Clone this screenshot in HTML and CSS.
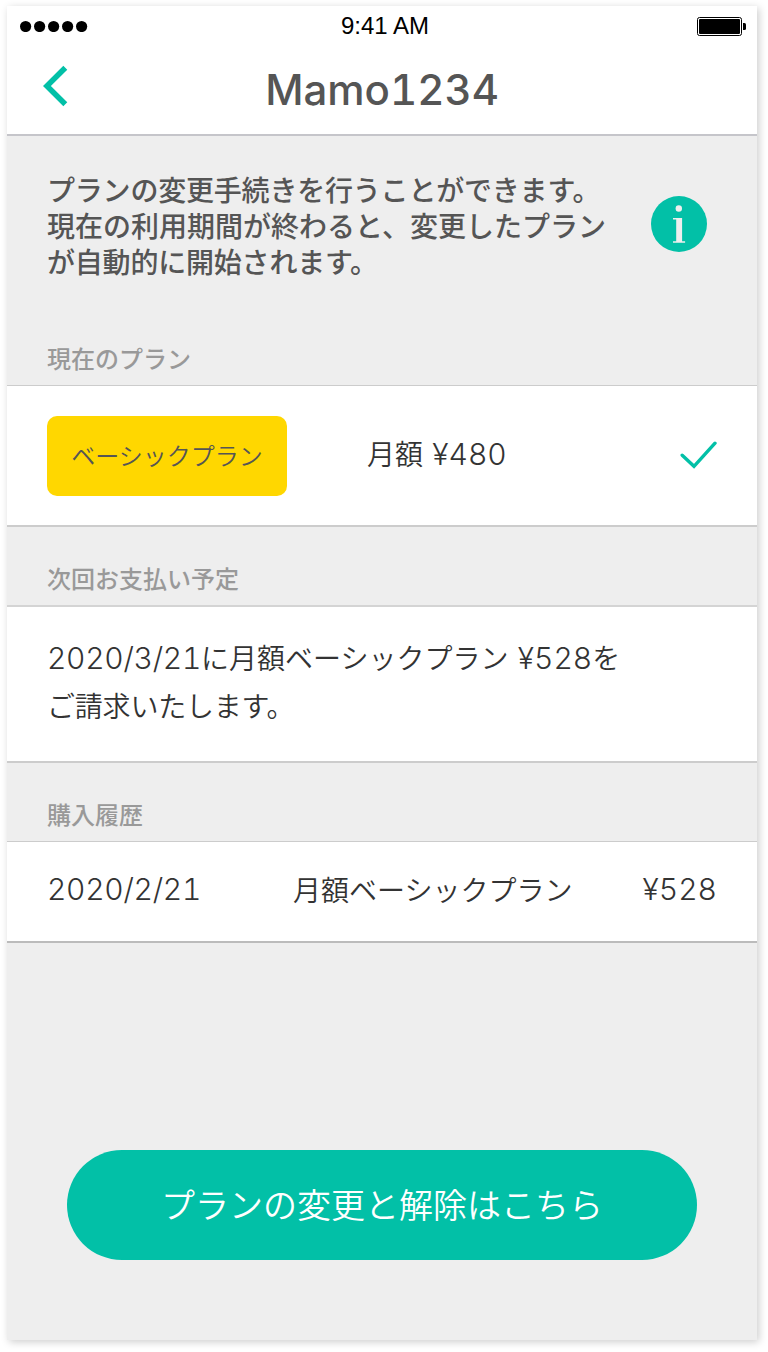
FILE: index.html
```html
<!DOCTYPE html>
<html lang="ja">
<head>
<meta charset="utf-8">
<title>Mamo1234</title>
<link rel="stylesheet" href="styles.css">
</head>
<body>
<main class="screen">
  <header class="header">
    <div class="status">
      <svg class="signal" width="68" height="12" viewBox="0 0 68 12"><circle cx="5.6" cy="6.5" r="5.6"/><circle cx="19.6" cy="6.5" r="5.6"/><circle cx="33.6" cy="6.5" r="5.6"/><circle cx="47.6" cy="6.5" r="5.6"/><circle cx="61.6" cy="6.5" r="5.6"/></svg>
      <span class="time">9:41 AM</span>
      <svg class="battery" width="49" height="19" viewBox="0 0 49 19"><rect x=".5" y=".5" width="44" height="18" rx="2" fill="none" stroke="#000"/><rect x="2" y="2" width="41" height="15" rx="1"/><path d="M46 6h1.500q1.500 0 1.500 1.500v4q0 1.500-1.500 1.500H46z"/></svg>
    </div>
    <div class="nav">
      <svg class="back" width="26" height="42" viewBox="0 0 26 42"><path d="M22.300 2.800 3.900 21l18.400 18.200" fill="none" stroke="#02c0a7" stroke-width="5.600" stroke-linecap="butt" stroke-linejoin="miter"/></svg>
      <h1 class="title">Mamo<span class="title-num">1234</span></h1>
    </div>
  </header>

  <section class="intro">
    <p class="intro-text"><span class="tight">プランの変更手続きを行うことができます。</span><br>現在の利用期間が終わると、変更したプラン<br><span class="tight">が自動的に開始されます。</span></p>
    <svg class="info" width="56" height="56" viewBox="0 0 56 56"><circle cx="28" cy="28" r="28" fill="#02c0a7"/><circle cx="27.800" cy="12.500" r="3.200" fill="#eee"/><path d="M22 22h9.100v23.200h3v1.500H22v-1.500h3.200V23.500H22z" fill="#eee"/></svg>
  </section>

  <h2 class="label label-first">現在のプラン</h2>
  <section class="row row-plan">
    <span class="badge">ベーシックプラン</span>
    <span class="price">月額 <span class="num">¥480</span></span>
    <svg class="check" width="38" height="28" viewBox="0 0 38 28"><path d="M3.200 14.200 15 25.300 36 2.200" fill="none" stroke="#02c0a7" stroke-width="3.400" stroke-linecap="round" stroke-linejoin="miter"/></svg>
  </section>

  <h2 class="label label-next">次回お支払い予定</h2>
  <section class="row row-next">
    <p class="next-text"><span class="num date-text">2020/3/21</span>に月額ベーシックプラン <span class="num">¥528</span>を<br><span class="tight">ご請求いたします。</span></p>
  </section>

  <h2 class="label label-history">購入履歴</h2>
  <section class="row row-history">
    <span class="num date date-text">2020/2/21</span>
    <span class="item">月額ベーシックプラン</span>
    <span class="num amount">¥528</span>
  </section>

  <footer class="footer">
    <button class="button" type="button">プランの変更と解除はこちら</button>
  </footer>
</main>
</body>
</html>
```
FILE: styles.css
```css
* {
  box-sizing: border-box;
}

body {
  margin: 0;
  padding: 6px 11px 12px 7px;
  background: #fff;
  color: #333;
  font-family: "Noto Sans CJK JP", sans-serif;
}

h1, h2, p {
  margin: 0;
}

svg {
  display: block;
  flex: none;
}

.screen {
  display: flex;
  flex-direction: column;
  width: 750px;
  height: 1334px;
  background: #eee;
  box-shadow: 2px 2px 8px rgba(0, 0, 0, .2);
  white-space: nowrap;
}

.header {
  height: 130px;
  background: #fff;
  border-bottom: 2px solid #c5c5ca;
}

.status {
  display: grid;
  grid-template-columns: 1fr auto 1fr;
  align-items: center;
  height: 40px;
  padding: 0 11px 0 13px;
}

.time {
  padding-left: 4px;
  color: #000;
  font: 24px/40px "Liberation Sans", Arial, sans-serif;
}

.battery {
  justify-self: end;
}

.nav {
  display: grid;
  grid-template-columns: 60px 1fr 60px;
  height: 88px;
}

.back {
  margin: 19px 0 0 36px;
}

.title {
  color: #555;
  font: 550 42px/88px Inter, sans-serif;
  text-align: center;
}

.title-num {
  font-variant-numeric: tabular-nums;
}

.intro {
  display: flex;
  height: 194px;
  padding: 35px 50px 0 40px;
  justify-content: space-between;
}

.intro-text {
  color: #555;
  font-size: 28px;
  font-weight: 500;
  line-height: 36px;
}

.tight {
  letter-spacing: -.2px;
}

.info {
  margin-top: 25px;
}

.label {
  height: 78px;
  padding-left: 40px;
  color: #999;
  font-size: 24px;
  font-weight: 500;
  line-height: 36px;
}

.label-first {
  height: 55px;
  padding-top: 10px;
}

.label-next,
.label-history {
  padding-top: 33px;
}

.row {
  display: flex;
  padding: 0 40px;
  background: #fff;
  border-top: 1px solid #ccc;
  border-bottom: 2px solid #ccc;
  font-size: 28px;
  font-weight: 350;
}

.num {
  font-family: Inter, sans-serif;
  font-size: 30px;
  font-weight: 300;
  font-variant-numeric: tabular-nums;
}

.date-text {
  letter-spacing: -.3px;
}

.row-plan {
  height: 142px;
  align-items: center;
}

.badge {
  width: 240px;
  height: 80px;
  border-radius: 10px;
  background: #ffd700;
  color: #555;
  font-size: 24px;
  line-height: 78px;
  text-align: center;
}

.price {
  flex: 1;
  padding: 0 0 5px 80px;
  line-height: 40px;
  word-spacing: 3px;
}

.check {
  margin-bottom: 2px;
}

.row-next {
  height: 158px;
  padding-top: 27px;
  border-top: 2px solid #d4d4d4;
}

.next-text {
  line-height: 47px;
  word-spacing: 3px;
}

.row-history {
  height: 102px;
  line-height: 94px;
  border-bottom-color: #bbb;
}

.date {
  width: 246px;
}

.item {
  flex: 1;
}

.footer {
  display: flex;
  justify-content: center;
  padding-top: 207px;
}

.button {
  width: 630px;
  height: 110px;
  padding: 0 0 4px;
  border: 0;
  border-radius: 55px;
  background: #02c0a7;
  color: #fff;
  font: 350 34px "Noto Sans CJK JP", sans-serif;
}
```
